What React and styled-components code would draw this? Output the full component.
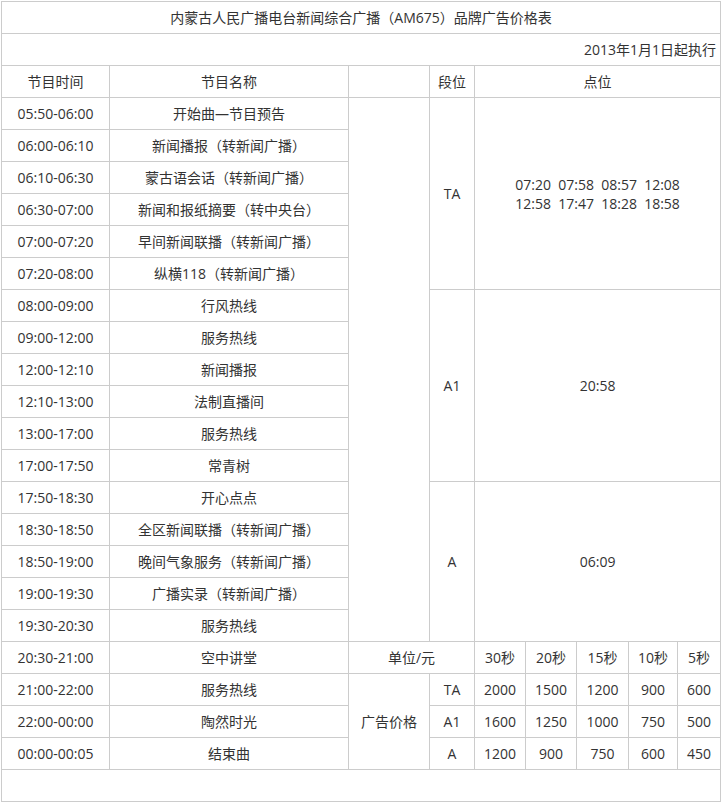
import React from "react";
import styled, { createGlobalStyle } from "styled-components";

const Global = createGlobalStyle`
  html, body { margin: 0; padding: 0; background: #fff; }
  body { font-family: "Open Sans", "Noto Sans CJK SC", sans-serif; color: #333; }
`;

const Page = styled.div`
  padding: 1px 0 0 1px;
`;

const Table = styled.table`
  border-collapse: collapse;
  table-layout: fixed;
  width: 720px;
  font-size: 14px;
  color: #333;
`;

const Row = styled.tr`
  height: 32px;
`;

const Cell = styled.td`
  border: 1px solid #ccc;
  padding: 0;
  text-align: ${(p) => p.$align || "center"};
  padding-right: ${(p) => (p.$align === "right" ? "4px" : "0")};
  vertical-align: middle;
  line-height: 20px;
  white-space: nowrap;
`;

const Points = styled.div`
  line-height: 19px;
  white-space: pre;
`;

const cols = [108, 239, 81, 45, 51, 51, 52, 49, 43];

const schedule = [
  ["05:50-06:00", "开始曲—节目预告"],
  ["06:00-06:10", "新闻播报（转新闻广播）"],
  ["06:10-06:30", "蒙古语会话（转新闻广播）"],
  ["06:30-07:00", "新闻和报纸摘要（转中央台）"],
  ["07:00-07:20", "早间新闻联播（转新闻广播）"],
  ["07:20-08:00", "纵横118（转新闻广播）"],
  ["08:00-09:00", "行风热线"],
  ["09:00-12:00", "服务热线"],
  ["12:00-12:10", "新闻播报"],
  ["12:10-13:00", "法制直播间"],
  ["13:00-17:00", "服务热线"],
  ["17:00-17:50", "常青树"],
  ["17:50-18:30", "开心点点"],
  ["18:30-18:50", "全区新闻联播（转新闻广播）"],
  ["18:50-19:00", "晚间气象服务（转新闻广播）"],
  ["19:00-19:30", "广播实录（转新闻广播）"],
  ["19:30-20:30", "服务热线"],
];

const segments = {
  0: { name: "TA", span: 6, points: "07:20  07:58  08:57  12:08\n12:58  17:47  18:28  18:58" },
  6: { name: "A1", span: 6, points: "20:58" },
  12: { name: "A", span: 5, points: "06:09" },
};

const prices = [
  ["21:00-22:00", "服务热线", "TA", ["2000", "1500", "1200", "900", "600"]],
  ["22:00-00:00", "陶然时光", "A1", ["1600", "1250", "1000", "750", "500"]],
  ["00:00-00:05", "结束曲", "A", ["1200", "900", "750", "600", "450"]],
];

export default function App() {
  return (
    <Page>
      <Global />
      <Table>
        <colgroup>
          {cols.map((w, i) => (
            <col key={i} style={{ width: w }} />
          ))}
        </colgroup>
        <tbody>
          <Row>
            <Cell colSpan={9}>内蒙古人民广播电台新闻综合广播（AM675）品牌广告价格表</Cell>
          </Row>
          <Row>
            <Cell colSpan={9} $align="right">2013年1月1日起执行</Cell>
          </Row>
          <Row>
            <Cell>节目时间</Cell>
            <Cell>节目名称</Cell>
            <Cell />
            <Cell>段位</Cell>
            <Cell colSpan={5}>点位</Cell>
          </Row>
          {schedule.map(([time, name], i) => (
            <Row key={time}>
              <Cell>{time}</Cell>
              <Cell>{name}</Cell>
              {i === 0 && <Cell rowSpan={17} />}
              {segments[i] && (
                <>
                  <Cell rowSpan={segments[i].span}>{segments[i].name}</Cell>
                  <Cell rowSpan={segments[i].span} colSpan={5}>
                    <Points>{segments[i].points}</Points>
                  </Cell>
                </>
              )}
            </Row>
          ))}
          <Row>
            <Cell>20:30-21:00</Cell>
            <Cell>空中讲堂</Cell>
            <Cell colSpan={2}>单位/元</Cell>
            <Cell>30秒</Cell>
            <Cell>20秒</Cell>
            <Cell>15秒</Cell>
            <Cell>10秒</Cell>
            <Cell>5秒</Cell>
          </Row>
          {prices.map(([time, name, seg, vals], i) => (
            <Row key={time}>
              <Cell>{time}</Cell>
              <Cell>{name}</Cell>
              {i === 0 && <Cell rowSpan={3}>广告价格</Cell>}
              <Cell>{seg}</Cell>
              {vals.map((v, j) => (
                <Cell key={j}>{v}</Cell>
              ))}
            </Row>
          ))}
          <Row>
            <Cell colSpan={9} />
          </Row>
        </tbody>
      </Table>
    </Page>
  );
}
